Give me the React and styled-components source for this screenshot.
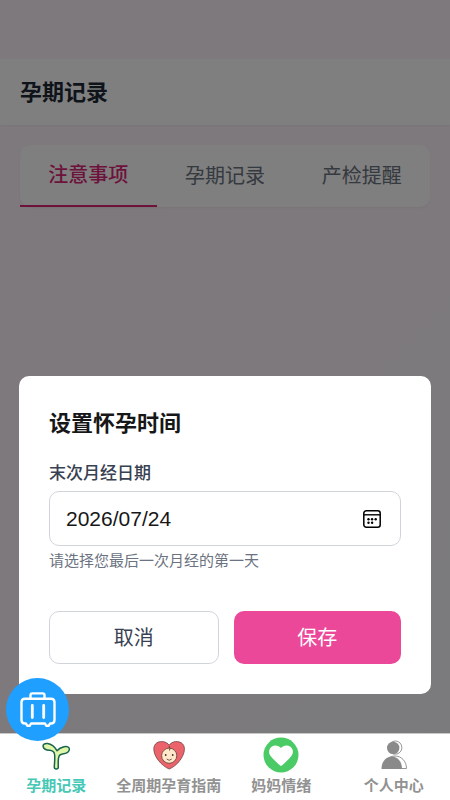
import React, { useState } from 'react'
import styled, { createGlobalStyle } from 'styled-components'

const GlobalStyle = createGlobalStyle`
  * {
    box-sizing: border-box;
  }

  body {
    margin: 0;
    font-family: "Liberation Sans", "Noto Sans CJK SC", sans-serif;
  }

  button,
  input {
    margin: 0;
    font-family: inherit;
  }
`

const Page = styled.div`
  min-height: 100vh;
  padding: 59px 0 67px;
  background: linear-gradient(135deg, #fdf2f8 0%, #fdf2f8 30%, #f5f5fa 100%);
`

const Header = styled.header`
  padding: 17px 20px 15px;
  background: #fff;
  box-shadow: 0 1px 2px rgba(0, 0, 0, 0.05);
`

const HeaderTitle = styled.h1`
  margin: 0;
  font-size: 22px;
  line-height: 34px;
  font-weight: 700;
  color: #1f2937;
`

const TabBar = styled.div`
  display: flex;
  height: 62px;
  margin: 20px;
  background: #fff;
  border-radius: 10px;
  box-shadow: 0 1px 2px rgba(0, 0, 0, 0.05);
`

const Tab = styled.button`
  flex: 1;
  padding: 0 0 3px;
  border: 0;
  border-bottom: ${({ $active }) => ($active ? '2px solid #db2777' : '0')};
  background: none;
  font-size: 20px;
  font-weight: ${({ $active }) => ($active ? 500 : 400)};
  color: ${({ $active }) => ($active ? '#db2777' : '#6b7280')};
`

const Overlay = styled.div`
  position: fixed;
  inset: 0;
  display: flex;
  align-items: flex-end;
  padding: 0 19px 106px;
  background: rgba(0, 0, 0, 0.5);
`

const Dialog = styled.form`
  flex: 1;
  padding: 30px;
  background: #fff;
  border-radius: 10px;
`

const DialogTitle = styled.h2`
  margin: 0 0 20px;
  padding-top: 1px;
  font-size: 22px;
  line-height: 34px;
  font-weight: 700;
  color: #171717;
`

const Label = styled.label`
  display: block;
  margin-bottom: 4px;
  font-size: 17px;
  line-height: 26px;
  font-weight: 500;
  color: #374151;
`

const DateField = styled.div`
  display: flex;
  align-items: center;
  height: 55px;
  padding: 0 16px;
  border: 1px solid #d1d5db;
  border-radius: 10px;
`

const DateInput = styled.input`
  flex: 1;
  min-width: 0;
  padding: 0;
  border: 0;
  outline: 0;
  background: none;
  font-size: 21px;
  color: #171717;
`

const PickerButton = styled.button`
  display: flex;
  padding: 0 2px;
  border: 0;
  background: none;
`

const Hint = styled.p`
  margin: 5px 0 40px;
  font-size: 15px;
  line-height: 20px;
  color: #6b7280;
`

const Actions = styled.div`
  display: flex;
  gap: 15px;
`

const ActionButton = styled.button`
  flex: 1;
  height: 53px;
  padding: 0 0 3px;
  border: ${({ $primary }) => ($primary ? '0' : '1px solid #d1d5db')};
  border-radius: 10px;
  background: ${({ $primary }) => ($primary ? '#ec4899' : '#fff')};
  font-size: 20px;
  color: ${({ $primary }) => ($primary ? '#fff' : '#374151')};
`

const Nav = styled.nav`
  position: fixed;
  right: 0;
  bottom: 0;
  left: 0;
  display: flex;
  height: 67px;
  border-top: 1px solid #c8c8c8;
  background: #fff;
`

const NavLink = styled.a`
  display: flex;
  flex: 1;
  flex-direction: column;
  align-items: center;
  padding-top: 3px;
  font-size: 15px;
  line-height: 24px;
  font-weight: 700;
  color: ${({ $active }) => ($active ? '#46c8b6' : '#929292')};
  text-decoration: none;
  white-space: nowrap;
`

const NavIcon = styled.svg`
  width: 36px;
  height: 36px;
  margin-bottom: 1px;
`

const BagButton = styled.button`
  position: fixed;
  bottom: 59px;
  left: 6px;
  display: flex;
  align-items: center;
  justify-content: center;
  width: 63px;
  height: 63px;
  padding: 0;
  border: 0;
  border-radius: 50%;
  background: #1f9fff;
`

const CalendarIcon = () => (
  <svg width="20" height="20" viewBox="0 0 20 20" fill="none" aria-hidden="true">
    <rect x="1.8" y="1.8" width="16.400" height="16.400" rx="2.500" stroke="#000" strokeWidth="1.500" />
    <path d="M2 5.800h16" stroke="#000" strokeWidth="1.400" />
    <g fill="#000">
      <circle cx="6.500" cy="10.200" r="1.200" />
      <circle cx="10.100" cy="10.200" r="1.200" />
      <circle cx="13.700" cy="10.200" r="1.200" />
      <circle cx="6.500" cy="13.800" r="1.200" />
      <circle cx="10.100" cy="13.800" r="1.200" />
    </g>
  </svg>
)

const SuitcaseIcon = () => (
  <svg
    width="40"
    height="40"
    viewBox="0 0 40 40"
    fill="none"
    stroke="#fff"
    strokeWidth="2.400"
    strokeLinecap="round"
    strokeLinejoin="round"
    aria-hidden="true"
  >
    <path d="M12.500 8.800V5.200q0-1.800 1.800-1.800h10.400q1.800 0 1.800 1.800v3.600" />
    <path d="M7 8.800h26q3.500 0 3.500 3.500v17.700q0 3.500-3.500 3.500h-1l-1.200 2.200h-2.600L27 33.500H13l-1.200 2.200H9.200L8 33.500H7q-3.500 0-3.500-3.500V12.300q0-3.500 3.500-3.500z" />
    <path d="M14.300 15.500v12M25.700 15.500v12" strokeWidth="2.800" />
  </svg>
)

const SproutIcon = () => (
  <NavIcon viewBox="0 0 36 36" aria-hidden="true">
    <path
      d="M16.300 30Q16.300 32 18.300 32T20.300 30C20.100 26 20 22.500 20.900 19.500C21.300 18 22.500 17.300 24.500 17C28.500 16.700 31.200 14.800 31.400 12.300C31.400 9.800 29 9.100 26 9.800C23 10.500 20.700 11.800 19 13.700C17 10.200 14.500 7 9.500 6.500C6.500 6.200 4.800 7.400 5.100 9.400C5.500 12 8 13.200 11.500 13.300C14.500 13.500 16.200 14.700 16.600 17.500C17.100 21.500 16.500 26 16.300 30z"
      fill="#dff6a8"
      stroke="#17634f"
      strokeWidth="1.500"
      strokeLinejoin="round"
    />
  </NavIcon>
)

const BabyHeartIcon = () => (
  <NavIcon viewBox="0 0 36 36" aria-hidden="true">
    <path
      d="M18.200 8.200C15.500 4 8 3.200 4.500 7C1 11 3.500 18.500 7.300 23.300C10.500 27.400 14.500 30.500 18.200 32C22 30.500 26 27.400 29 23.300C32.700 18.500 35.300 11 31.700 7C28 3.200 20.900 4 18.200 8.200z"
      fill="#ed636c"
      stroke="#6d4245"
      strokeWidth="0.800"
    />
    <circle cx="18.200" cy="18.700" r="7.600" fill="#ffe9ca" stroke="#6d4a3c" strokeWidth="0.900" />
    <path d="M18.500 13.500Q19.500 11.500 18 9" fill="none" stroke="#6d4245" strokeWidth="1" />
    <circle cx="14.700" cy="18" r="0.900" fill="#4a302b" />
    <circle cx="21.700" cy="18" r="0.900" fill="#4a302b" />
    <path d="M15.700 22Q18.200 24.600 20.700 22" fill="none" stroke="#6d4245" strokeWidth="0.900" />
  </NavIcon>
)

const MoodIcon = () => (
  <NavIcon viewBox="0 0 36 36" aria-hidden="true">
    <circle cx="18" cy="18" r="17.500" fill="#4acb66" />
    <path
      d="M18 11C15.700 8.300 11.500 7.700 8.600 9.700C5.400 12.200 5.500 16.300 7.800 19.200C10.500 22.400 14 25.700 16.800 28.300Q18 29.400 19.200 28.300C22 25.700 25.500 22.400 28.200 19.200C30.500 16.300 30.600 12.200 27.400 9.700C24.500 7.700 20.300 8.300 18 11z"
      fill="#fff"
    />
  </NavIcon>
)

const PersonIcon = () => (
  <NavIcon viewBox="0 0 36 36" aria-hidden="true">
    <circle cx="19.300" cy="10.600" r="6.600" fill="#fff" stroke="#8a8a8a" strokeWidth="0.900" />
    <circle cx="17.200" cy="11" r="6.200" fill="#8a8a8a" />
    <path d="M9 31.500C9 23.800 13 19 19 19S30.500 23.800 30.500 31.500z" fill="#fff" stroke="#8a8a8a" strokeWidth="0.900" />
    <path d="M5.500 32C5.500 24.500 10 19.600 15.800 19.600S26 24.500 26 32z" fill="#8a8a8a" />
  </NavIcon>
)

const tabs = ['注意事项', '孕期记录', '产检提醒']

const navItems = [
  { label: '孕期记录', Icon: SproutIcon },
  { label: '全周期孕育指南', Icon: BabyHeartIcon },
  { label: '妈妈情绪', Icon: MoodIcon },
  { label: '个人中心', Icon: PersonIcon },
]

const DateDialog = () => {
  const [date, setDate] = useState('2026/07/24')

  return (
    <Overlay>
      <Dialog role="dialog" aria-labelledby="dialog-title" onSubmit={e => e.preventDefault()}>
        <DialogTitle id="dialog-title">设置怀孕时间</DialogTitle>
        <Label htmlFor="last-period">末次月经日期</Label>
        <DateField>
          <DateInput
            id="last-period"
            type="text"
            value={date}
            onChange={e => setDate(e.target.value)}
          />
          <PickerButton type="button" aria-label="选择日期">
            <CalendarIcon />
          </PickerButton>
        </DateField>
        <Hint>请选择您最后一次月经的第一天</Hint>
        <Actions>
          <ActionButton type="button">取消</ActionButton>
          <ActionButton type="submit" $primary>保存</ActionButton>
        </Actions>
      </Dialog>
    </Overlay>
  )
}

const App = () => {
  const [activeTab, setActiveTab] = useState(tabs[0])

  return (
    <>
      <GlobalStyle />
      <Page>
        <Header>
          <HeaderTitle>孕期记录</HeaderTitle>
        </Header>
        <TabBar>
          {tabs.map(tab => (
            <Tab key={tab} type="button" $active={tab === activeTab} onClick={() => setActiveTab(tab)}>
              {tab}
            </Tab>
          ))}
        </TabBar>
      </Page>
      <DateDialog />
      <Nav>
        {navItems.map(({ label, Icon }, i) => (
          <NavLink key={label} href="#" $active={i === 0}>
            <Icon />
            {label}
          </NavLink>
        ))}
      </Nav>
      <BagButton type="button" aria-label="待产包">
        <SuitcaseIcon />
      </BagButton>
    </>
  )
}

export default App
